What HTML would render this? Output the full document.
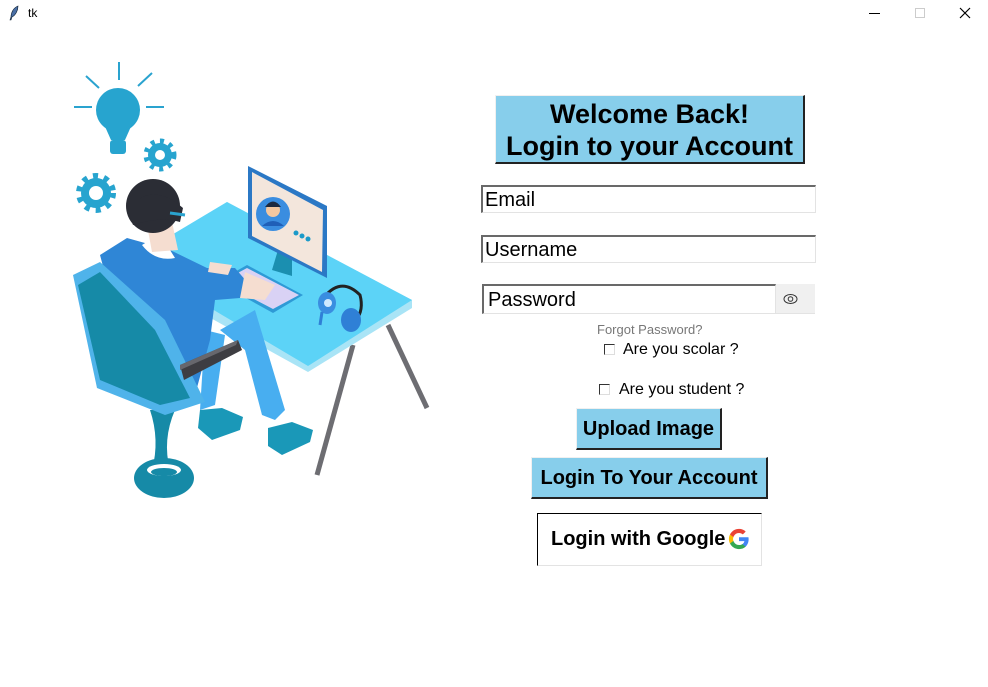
<!DOCTYPE html>
<html><head><meta charset="utf-8"><style>
body{margin:0;width:988px;height:687px;background:#fff;position:relative;overflow:hidden;font-family:"Liberation Sans",Arial,sans-serif}
.a{position:absolute;box-sizing:border-box}
.btn{background:#87ceeb;border-top:1px solid #f0f0f0;border-left:1px solid #f0f0f0;border-right:2px solid #222;border-bottom:2px solid #222;font-weight:bold;text-align:center;color:#000}
.ent{border-top:2px solid #696969;border-left:2px solid #696969;border-right:1px solid #e3e3e3;border-bottom:1px solid #e3e3e3;background:#fff;font-size:20px;padding-left:2px;line-height:27px}
.cb{width:11px;height:11px;border-top:1.5px solid #333;border-left:1.5px solid #333;border-right:1px solid #ddd;border-bottom:1px solid #ddd}
.lbl{font-size:16px;color:#000}
</style></head><body>
<svg class="a" style="left:8px;top:5px" width="12" height="16" viewBox="0 0 12 16"><path d="M10 1 C5 3 3 8 3 12 L2 15 L3 15 L4 12 C8 10 10 5 10 1Z" fill="#4a6fa5" stroke="#123" stroke-width=".6"/></svg>
<div class="a" style="left:28px;top:6px;font-size:12px">tk</div>
<div class="a" style="left:869px;top:13px;width:11px;height:1px;background:#000"></div>
<div class="a" style="left:915px;top:8px;width:10px;height:10px;border:1px solid #ccc"></div>
<svg class="a" style="left:959px;top:7px" width="12" height="12"><path d="M1 1L11 11M11 1L1 11" stroke="#000" stroke-width="1.2"/></svg>

<svg class="a" style="left:0;top:0" width="460" height="520" viewBox="0 0 460 520">
<g stroke="#2aa3cf" stroke-width="2"><path d="M119 62V80M86 76L99 88M152 73L138 86M74 107H92M146 107H164"/></g>
<circle cx="118" cy="110" r="22" fill="#27a4cf"/><path d="M103 122L111 140H125L133 122Z" fill="#27a4cf"/><rect x="110" y="140" width="16" height="14" rx="3" fill="#27a4cf"/>
<g fill="#27a4cf"><circle cx="160" cy="155" r="12"/><circle cx="96" cy="193" r="15"/></g>
<g stroke="#27a4cf" stroke-width="5" stroke-dasharray="4 5.4"><circle cx="160" cy="155" r="14" fill="none"/></g>
<g stroke="#27a4cf" stroke-width="6" stroke-dasharray="5 6"><circle cx="96" cy="193" r="17" fill="none"/></g>
<circle cx="160" cy="155" r="5" fill="#fff"/><circle cx="96" cy="193" r="7" fill="#fff"/>
<path d="M353 345L317 475" stroke="#6d6d72" stroke-width="5"/><path d="M388 325L427 408" stroke="#6d6d72" stroke-width="5"/>
<path d="M160 242L227 202L412 300L412 308L308 372L160 290Z" fill="#a9e4f6"/>
<path d="M160 242L227 202L412 300L308 366L180 290Z" fill="#5cd3f7"/>
<path d="M278 250L292 256L292 276L272 270Z" fill="#1b8fb0"/>
<path d="M248 166L327 206L327 278L248 238Z" fill="#2b78c5"/>
<path d="M252 172L323 210L322 272L252 236Z" fill="#f3e6dc"/>
<circle cx="273" cy="214" r="17" fill="#3a8de0"/><circle cx="273" cy="210" r="7" fill="#f4c7a0"/><path d="M265 207Q273 196 281 207Z" fill="#1e2a40"/><path d="M262 226Q273 216 284 226Z" fill="#1f5fb8"/>
<g fill="#1b9ac9"><circle cx="296" cy="233" r="2.5"/><circle cx="302" cy="236" r="2.5"/><circle cx="308" cy="239" r="2.5"/></g>
<path d="M217 282L247 265L303 295L273 313Z" fill="#2e9ad6"/><path d="M221 282L247 268L299 295L273 309Z" fill="#d9d2f5"/>
<path d="M322 300Q340 275 360 295Q364 310 356 320" fill="none" stroke="#222" stroke-width="3"/>
<ellipse cx="327" cy="303" rx="9" ry="11" fill="#3a8de0"/><circle cx="328" cy="303" r="4" fill="#cfe9ff"/>
<ellipse cx="351" cy="320" rx="10" ry="12" fill="#2f80d6"/><path d="M322 312L320 325" stroke="#2f80d6" stroke-width="3"/>
<path d="M150 410Q160 440 152 470L170 470Q162 440 175 410Z" fill="#168aa7"/>
<ellipse cx="164" cy="478" rx="30" ry="20" fill="#168aa7"/><ellipse cx="164" cy="470" rx="17" ry="6" fill="#fff"/><ellipse cx="164" cy="472" rx="13" ry="4" fill="#168aa7"/>
<path d="M220 330L255 310L285 410L275 420L262 415L245 350Z" fill="#48aef0"/>
<path d="M205 330L225 335L215 405L200 410Z" fill="#48aef0"/>
<path d="M200 410L222 408L243 417L240 430L212 440L198 428Z" fill="#1a98b8"/>
<path d="M268 428L292 422L313 430L310 442L282 455L268 446Z" fill="#1a98b8"/>
<path d="M100 255L127 238L170 250L207 268L235 268L247 282L240 298L215 300L210 340L195 395L160 390L120 330Z" fill="#2f86d6"/>
<path d="M245 272L275 285L265 300L240 298Z" fill="#f5ddd0"/><path d="M210 262L232 265L228 275L208 272Z" fill="#f5ddd0"/>
<path d="M142 245Q155 262 175 258L170 250Q155 252 150 240Z" fill="#fff"/>
<path d="M147 225L172 222L178 250L152 252Z" fill="#f5ddd0"/>
<circle cx="153" cy="206" r="27" fill="#2b2d35"/><path d="M128 210Q150 180 183 208L180 222Q160 216 133 225Z" fill="#2b2d35"/>
<path d="M170 213L185 215" stroke="#2aa3cf" stroke-width="3"/>
<path d="M73 275L100 262L165 320L205 402L165 415L97 388Z" fill="#4fb3ea"/>
<path d="M78 285L100 272L155 330L190 398L160 405L100 380Z" fill="#168aa7"/>
<path d="M180 365L238 340L242 350L184 380Z" fill="#3d3d42"/><path d="M180 365L238 340L236 345L180 370Z" fill="#67676d"/>
</svg>

<div class="a btn" style="left:495px;top:95px;width:310px;height:69px;font-size:27px;line-height:32px;padding-top:2px">Welcome Back!<br>Login to your Account</div>
<div class="a ent" style="left:481px;top:185px;width:335px;height:28px">Email</div>
<div class="a ent" style="left:481px;top:235px;width:335px;height:28px">Username</div>
<div class="a ent" style="left:482px;top:284px;width:294px;height:30px;line-height:29px;padding-left:4px">Password</div>
<div class="a" style="left:776px;top:284px;width:39px;height:30px;background:#f0f0f0;border-bottom:1px solid #e3e3e3"></div>
<svg class="a" style="left:783px;top:292px" width="16" height="14"><ellipse cx="7.5" cy="7" rx="6.5" ry="4.5" fill="none" stroke="#333" stroke-width="1"/><circle cx="7.5" cy="7" r="2.3" fill="none" stroke="#333"/></svg>
<div class="a" style="left:597px;top:322px;font-size:13px;color:#777">Forgot Password?</div>
<div class="a cb" style="left:604px;top:344px"></div><div class="a lbl" style="left:623px;top:341px">Are you scolar ?</div>
<div class="a cb" style="left:599px;top:384px"></div><div class="a lbl" style="left:619px;top:381px">Are you student ?</div>
<div class="a btn" style="left:576px;top:408px;width:146px;height:42px;font-size:20px;line-height:40px">Upload Image</div>
<div class="a btn" style="left:531px;top:457px;width:237px;height:42px;font-size:20px;line-height:40px">Login To Your Account</div>
<div class="a" style="left:537px;top:513px;width:225px;height:53px;background:#fff;border-top:1px solid #000;border-left:1px solid #000;border-right:1px solid #e3e3e3;border-bottom:1px solid #e3e3e3;font-weight:bold;font-size:20px;line-height:50px;padding-left:13px">Login with Google</div>
<svg class="a" style="left:728px;top:528px" width="22" height="22" viewBox="0 0 24 24">
<path d="M22.5 12.3c0-.8-.1-1.5-.2-2.2H12v4.2h5.9c-.3 1.4-1 2.5-2.2 3.3v2.7h3.6c2-1.9 3.2-4.7 3.2-8z" fill="#4285F4"/>
<path d="M12 23c3 0 5.5-1 7.3-2.7l-3.6-2.7c-1 .7-2.200 1-3.7 1-2.8 0-5.2-1.9-6.1-4.5H2.2v2.8C4 20.5 7.7 23 12 23z" fill="#34A853"/>
<path d="M5.9 14.1c-.2-.7-.4-1.4-.4-2.1s.1-1.4.4-2.1V7.1H2.2C1.4 8.6 1 10.2 1 12s.4 3.4 1.2 4.9l3.7-2.8z" fill="#FBBC05"/>
<path d="M12 5.4c1.6 0 3 .6 4.2 1.6l3.1-3.1C17.5 2.1 15 1 12 1 7.7 1 4 3.5 2.2 7.1l3.7 2.8c.9-2.6 3.3-4.5 6.100-4.5z" fill="#EA4335"/>
</svg>
</body></html>
